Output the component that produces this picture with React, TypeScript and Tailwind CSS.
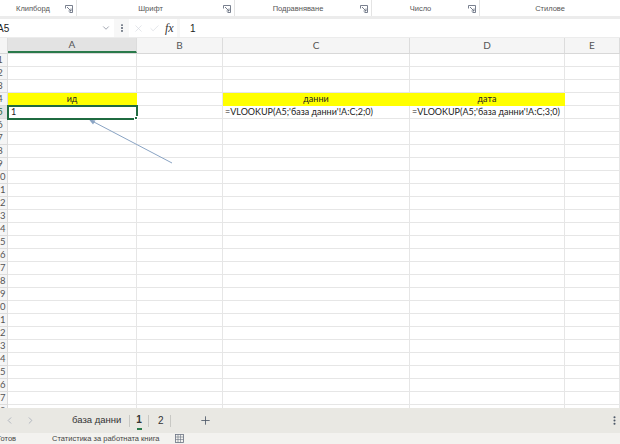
import React from 'react';
import { Check, ChevronDown, ChevronLeft, ChevronRight, EllipsisVertical, Plus, X } from 'lucide-react';

const cols = [
  { key: '', w: 'w-[8px]' },
  { key: 'A', w: 'w-[129px]' },
  { key: 'B', w: 'w-[86px]' },
  { key: 'C', w: 'w-[187px]' },
  { key: 'D', w: 'w-[155px]' },
  { key: 'E', w: 'flex-1' },
];

const groups = [
  { name: 'Клипборд', w: 'w-[77px]', launcher: true },
  { name: 'Шрифт', w: 'w-[158px]', launcher: true },
  { name: 'Подравняване', w: 'w-[137px]', launcher: true },
  { name: 'Число', w: 'w-[108px]', launcher: true },
  { name: 'Стилове', w: 'flex-1', launcher: false },
];

const rows = Array.from({ length: 28 }, (_, i) => i + 1);

// dialog launcher in the corner of each ribbon group
const Launcher = () => (
  <svg width="8" height="8" viewBox="0 0 8 8" className="text-gray-500">
    <path d="M0.5 3.5V0.5H7.5V7.5H4.5" fill="none" stroke="currentColor" strokeWidth="0.9" />
    <path d="M2 2L6 6M6 3.5V6H3.5" fill="none" stroke="currentColor" strokeWidth="0.9" />
  </svg>
);

const cellText: Record<string, React.ReactNode> = {
  '4A': <span className="w-full text-center">ид</span>,
  '4C': <span className="w-full text-center">данни</span>,
  '4D': <span className="w-full text-center">дата</span>,
  '5A': <span className="pl-[3px]">1</span>,
  '5C': <span className="pl-[2px] whitespace-nowrap">=VLOOKUP(A5;'база данни'!A:C;2;0)</span>,
  '5D': <span className="pl-[2px] whitespace-nowrap">=VLOOKUP(A5;'база данни'!A:C;3;0)</span>,
};

const App: React.FC = () => {
  return (
    <div
      className="relative w-[620px] h-[444px] overflow-hidden bg-white flex flex-col text-[#222]"
      style={{ fontFamily: '"Liberation Sans", Arial, sans-serif' }}
    >
      {/* ribbon group captions */}
      <div className="h-[16px] flex bg-white shrink-0">
        {groups.map((g, i) => (
          <div
            key={g.name}
            className={`${g.w} relative flex items-center justify-center pt-[1px] ${i < groups.length - 1 ? 'border-r border-[#e4e4e4]' : ''}`}
          >
            <span className={`text-[7.5px] text-[#555] ${g.launcher ? '-ml-[10px]' : ''}`}>{g.name}</span>
            {g.launcher && (
              <span className="absolute right-[3px] top-[5px]">
                <Launcher />
              </span>
            )}
          </div>
        ))}
      </div>
      <div className="h-[3px] bg-[#ececec] shrink-0" />

      {/* name box + formula bar */}
      <div className="h-[18px] flex items-stretch bg-[#f7f7f7] shrink-0">
        <div className="w-[114px] bg-white flex items-center justify-between pr-[3px]">
          <span className="text-[10px] -ml-[3px]">A5</span>
          <ChevronDown size={10} className="text-gray-500" strokeWidth={1.5} />
        </div>
        <div className="w-[15px] flex items-center justify-center">
          <EllipsisVertical size={10} className="text-gray-600" strokeWidth={2.5} />
        </div>
        <div className="w-[48px] bg-white flex items-center gap-[5px] pl-[4px]">
          <X size={11} className="text-gray-300" strokeWidth={1.3} />
          <Check size={11} className="text-gray-300" strokeWidth={1.3} />
          <span
            className="text-[12px] italic text-[#333] leading-none"
            style={{ fontFamily: '"Liberation Serif", serif' }}
          >
            fx
          </span>
        </div>
        <div className="w-[3px]" />
        <div className="flex-1 bg-white flex items-center pl-[10px]">
          <span className="text-[10px]">1</span>
        </div>
      </div>
      <div className="h-[1px] bg-[#ececec] shrink-0" />

      {/* worksheet */}
      <div
        className="flex-1 overflow-hidden text-[9px]"
        style={{ fontFamily: 'Lato, "Liberation Sans", sans-serif' }}
      >
        <div className="h-[16px] flex bg-[#f5f5f5] border-b border-[#d8d8d8] text-[10px]">
          {cols.map((c) => (
            <div
              key={c.key || 'corner'}
              className={`${c.w} shrink-0 flex items-center justify-center border-r border-[#dcdcdc] text-[#555] ${
                c.key === 'A' ? 'bg-[#e3e3e3] border-b-2 border-b-[#2a7a4b] text-[#2a6a45]' : ''
              }`}
            >
              {c.key}
            </div>
          ))}
        </div>
        {rows.map((r) => (
          <div key={r} className="h-[13px] flex">
            {cols.map((c) => {
              if (!c.key) {
                // row header is wider than the visible strip; only its right half shows
                return (
                  <div
                    key="h"
                    className={`w-[8px] shrink-0 overflow-hidden relative border-r border-b border-[#dcdcdc] text-[9.5px] ${
                      r === 5 ? 'bg-[#e3e3e3] text-[#2a6a45]' : 'bg-[#f5f5f5] text-[#555]'
                    }`}
                  >
                    <span className="absolute -left-[10px] w-[20px] top-0 h-full flex items-center justify-center">
                      {r}
                    </span>
                  </div>
                );
              }
              const id = `${r}${c.key}`;
              const yellow = r === 4 && c.key !== 'B' && c.key !== 'E';
              const selected = id === '5A';
              return (
                <div
                  key={c.key}
                  className={`${c.w} shrink-0 relative flex items-center border-r border-b ${
                    yellow ? 'bg-[#ffff00] border-[#ffff00]' : 'border-[#e6e6e6]'
                  } ${selected ? 'outline-2 -outline-offset-1 outline-[#1f6b40] z-10' : ''}`}
                >
                  {cellText[id]}
                  {selected && (
                    <span className="absolute -right-[2px] -bottom-[2px] w-[4px] h-[4px] bg-[#1f6b40] border border-white" />
                  )}
                </div>
              );
            })}
          </div>
        ))}
      </div>

      {/* sheet tabs */}
      <div className="h-[25px] flex items-center bg-[#e9e8e3] shrink-0 text-[9.5px] text-[#333]">
        <ChevronLeft size={11} className="ml-[4px] text-gray-400" strokeWidth={1.5} />
        <ChevronRight size={11} className="ml-[10px] text-gray-400" strokeWidth={1.5} />
        <span className="ml-[36px]">база данни</span>
        <span className="ml-[8px] w-px h-[12px] bg-[#c8c8c4]" />
        <div className="ml-[6px] flex flex-col items-center pt-[3px]">
          <span className="font-bold leading-none text-[10px]">1</span>
          <span className="mt-[3px] w-[5px] h-[2px] bg-[#2a7a4b]" />
        </div>
        <span className="ml-[6px] w-px h-[12px] bg-[#c8c8c4]" />
        <span className="ml-[9px] text-[10px]">2</span>
        <span className="ml-[7px] w-px h-[12px] bg-[#c8c8c4]" />
        <Plus size={13} className="ml-[28px] text-gray-600" strokeWidth={1.5} />
        <EllipsisVertical size={11} className="ml-auto text-gray-600" strokeWidth={2.5} />
      </div>

      {/* status bar */}
      <div className="h-[11px] flex items-center bg-[#f3f2ef] shrink-0 text-[7.5px] text-[#444]">
        <span className="-ml-[3px]">Готов</span>
        <span className="ml-[36px]">Статистика за работната книга</span>
        <svg width="9" height="9" viewBox="0 0 9 9" className="ml-[16px] text-gray-500">
          <rect x="0.5" y="0.5" width="8" height="8" fill="none" stroke="currentColor" strokeWidth="0.8" />
          <path d="M0.5 3H8.5M0.5 5.5H8.5M3 0.5V8.5M5.5 0.5V8.5" stroke="currentColor" strokeWidth="0.6" />
        </svg>
      </div>

      {/* annotation arrow */}
      <svg className="absolute left-0 top-0 pointer-events-none" width="620" height="444">
        <line x1="172" y1="163" x2="92" y2="121" stroke="#8aa4c4" strokeWidth="1" />
        <path d="M89 119.5L95.5 120.5L93 124.5Z" fill="#8aa4c4" />
      </svg>
    </div>
  );
};

export default App;
